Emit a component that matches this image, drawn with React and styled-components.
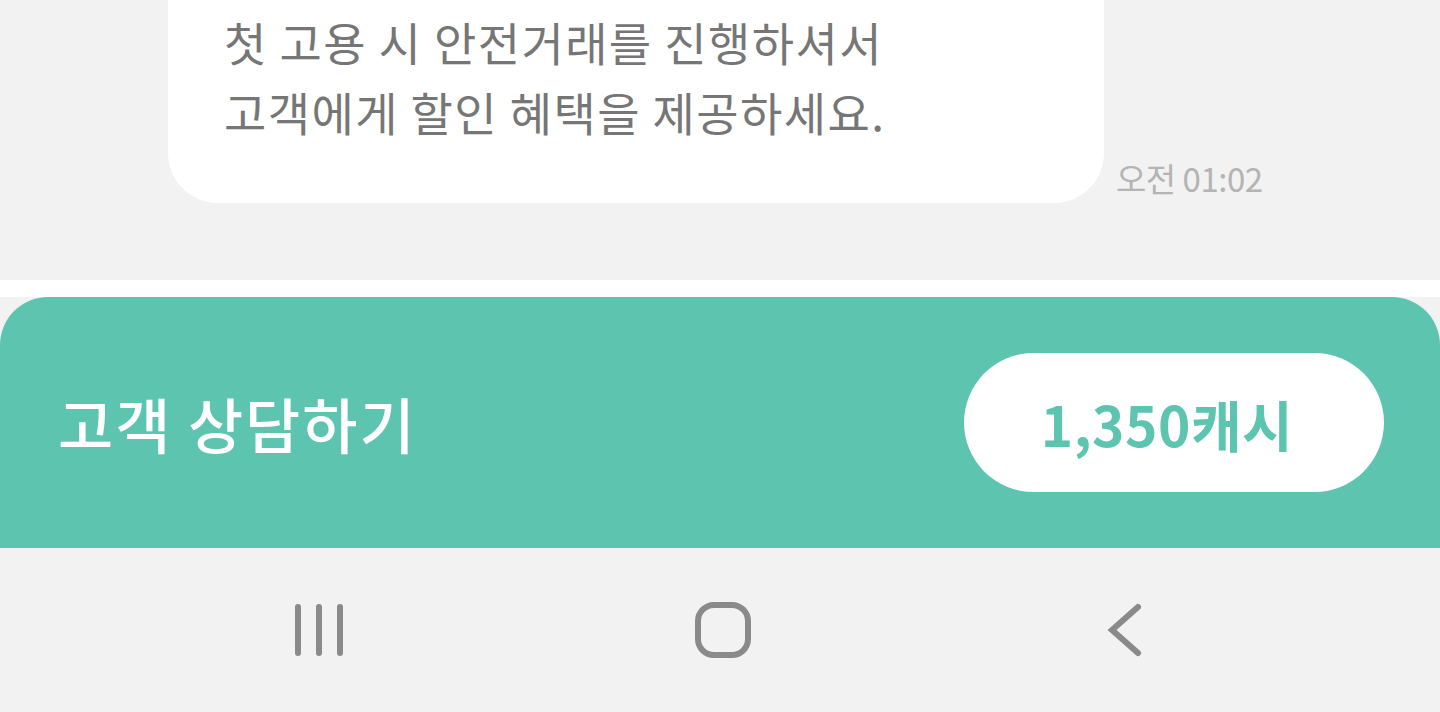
import React from "react";
import styled, { createGlobalStyle } from "styled-components";

const GlobalStyle = createGlobalStyle`
  html, body {
    margin: 0;
    padding: 0;
    background: #f2f2f2;
    font-family: "Noto Sans CJK KR", "Noto Sans", sans-serif;
  }
`;

const Screen = styled.div`
  width: 1440px;
  height: 712px;
  display: flex;
  flex-direction: column;
  overflow: hidden;
  background: #f2f2f2;
`;

const ChatArea = styled.div`
  height: 280px;
  display: flex;
  align-items: flex-start;
  padding-left: 168px;
  box-sizing: border-box;
`;

const MessageRow = styled.div`
  display: flex;
  align-items: flex-end;
  gap: 12px;
`;

const Bubble = styled.div`
  width: 936px;
  height: 203px;
  box-sizing: border-box;
  padding: 6px 56px 0;
  background: #ffffff;
  border-radius: 0 0 50px 50px;
  color: #767676;
  font-size: 46px;
  line-height: 70px;
  letter-spacing: 1.4px;
`;

const Time = styled.span`
  color: #b4b4b4;
  font-size: 33px;
  line-height: 40px;
  margin-bottom: 5px;
  letter-spacing: -0.5px;
`;

const Gap = styled.div`
  height: 17px;
  background: #ffffff;
`;

const ActionPanel = styled.div`
  height: 251px;
  background: #5cc4af;
  border-radius: 48px 48px 0 0;
  display: flex;
  align-items: center;
  justify-content: space-between;
  padding: 0 56px 0 58px;
  box-sizing: border-box;
`;

const PanelTitle = styled.span`
  color: #ffffff;
  font-size: 60px;
  font-weight: 500;
  letter-spacing: 2px;
`;

const PriceButton = styled.button`
  width: 420px;
  height: 139px;
  border: none;
  border-radius: 70px;
  background: #ffffff;
  color: #5cc4af;
  font-family: inherit;
  font-size: 55px;
  font-weight: 700;
  letter-spacing: 0.5px;
  padding: 0 14px 0 0;
  display: flex;
  align-items: center;
  justify-content: center;
`;

const NavBar = styled.nav`
  flex: 1;
  display: grid;
  grid-template-columns: repeat(3, 402px);
  justify-content: center;
  align-items: center;
  padding-left: 6px;
  background: #f2f2f2;
`;

const NavButton = styled.div`
  display: flex;
  justify-content: center;
  align-items: center;
  height: 100%;
`;

const iconColor = "#8a8a8a";

const RecentsIcon = () => (
  <svg width="52" height="56" viewBox="0 0 52 56">
    {[4, 25, 46].map((x) => (
      <line key={x} x1={x - 1} y1="5" x2={x - 1} y2="51" stroke={iconColor} strokeWidth="6" strokeLinecap="round" />
    ))}
  </svg>
);

const HomeIcon = () => (
  <svg width="58" height="58" viewBox="0 0 58 58">
    <rect x="4" y="4" width="50" height="50" rx="16" fill="none" stroke={iconColor} strokeWidth="6" />
  </svg>
);

const BackIcon = () => (
  <svg width="36" height="56" viewBox="0 0 36 56">
    <path d="M31 5 L5 28 L31 51" fill="none" stroke={iconColor} strokeWidth="6" strokeLinecap="round" strokeLinejoin="miter" />
  </svg>
);

export default function App() {
  return (
    <>
      <GlobalStyle />
      <Screen>
        <ChatArea>
          <MessageRow>
            <Bubble>
              첫 고용 시 안전거래를 진행하셔서
              <br />
              고객에게 할인 혜택을 제공하세요.
            </Bubble>
            <Time>오전 01:02</Time>
          </MessageRow>
        </ChatArea>
        <Gap />
        <ActionPanel>
          <PanelTitle>고객 상담하기</PanelTitle>
          <PriceButton>1,350캐시</PriceButton>
        </ActionPanel>
        <NavBar>
          <NavButton>
            <RecentsIcon />
          </NavButton>
          <NavButton>
            <HomeIcon />
          </NavButton>
          <NavButton>
            <BackIcon />
          </NavButton>
        </NavBar>
      </Screen>
    </>
  );
}
